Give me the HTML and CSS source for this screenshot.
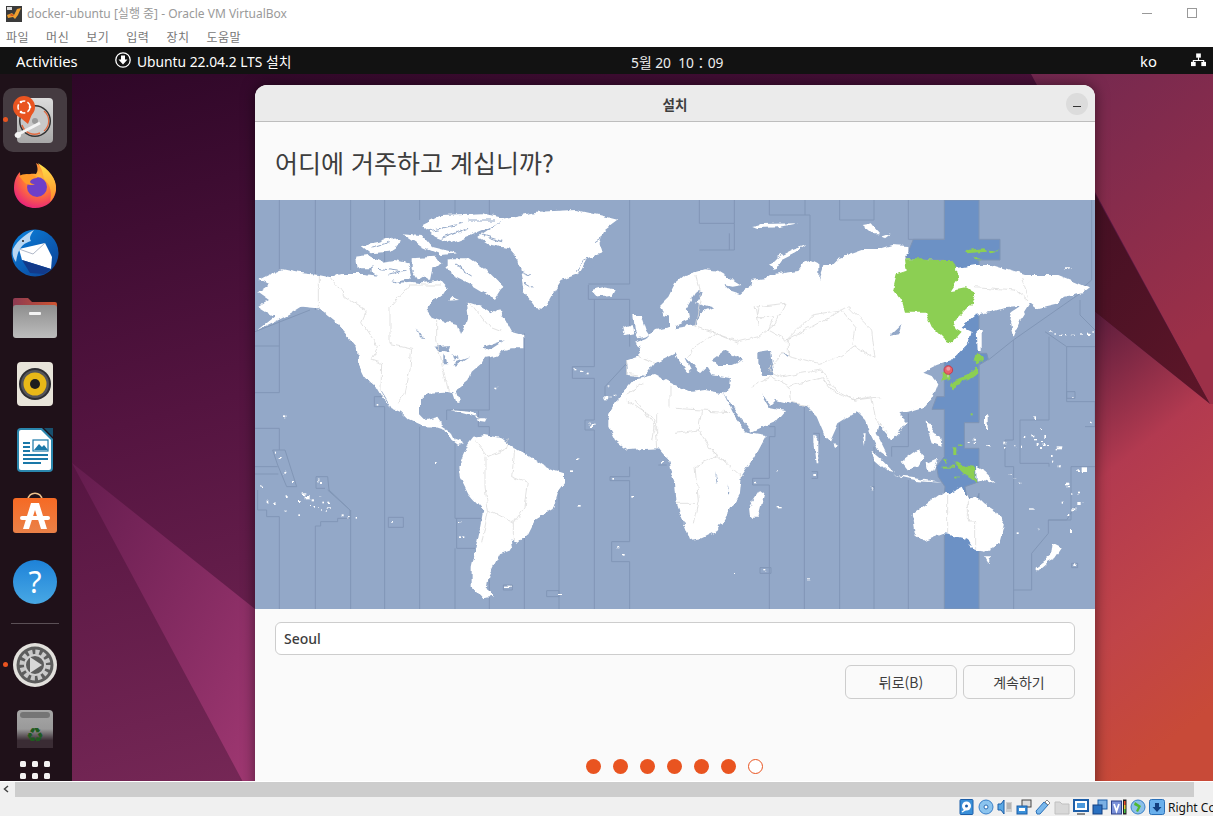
FILE: index.html
```html
<!DOCTYPE html>
<html lang="ko">
<head>
<meta charset="utf-8">
<title>docker-ubuntu</title>
<link rel="stylesheet" href="styles.css">
</head>
<body>
<div class="app">
  <header class="vb-title">
    <svg class="vb-logo" viewBox="0 0 16 16"><rect width="16" height="16" fill="#3a3a3a"/><rect x="1" y="1" width="5" height="3" fill="#ddd"/><path d="M1 9 L6 7 L8 9 L11 3 L15 2 L12 9 L9 13 L7 11 L2 12Z" fill="#f0a030"/><path d="M3 9 L6 8 L8 10 L6 10Z" fill="#d8501c"/></svg>
    <span class="vb-title-text">docker-ubuntu [실행 중] - Oracle VM VirtualBox</span>
    <span class="win-min"></span>
    <span class="win-max"></span>
  </header>
  <nav class="vb-menu">
    <span>파일</span><span>머신</span><span>보기</span><span>입력</span><span>장치</span><span>도움말</span>
  </nav>
  <div class="topbar">
    <span class="tb-activities">Activities</span>
    <svg class="tb-dl" viewBox="0 0 16 16"><circle cx="8" cy="8" r="7.2" fill="none" stroke="#fff" stroke-width="1.3"/><path d="M6 3.5h4v4h2.5L8 12.5 3.500 7.500H6z" fill="#fff"/></svg>
    <span class="tb-app">Ubuntu 22.04.2 LTS 설치</span>
    <span class="tb-clock">5월 20&nbsp; 10：09</span>
    <span class="tb-lang">ko</span>
    <svg class="tb-net" viewBox="0 0 16 14"><path d="M8 4v4M2.500 10V7.500h11V10" fill="none" stroke="#fff" stroke-width="1.200"/><rect x="5.500" y="0" width="5" height="4.500" fill="#fff"/><rect x="0" y="9" width="5" height="4.500" fill="#fff"/><rect x="11" y="9" width="5" height="4.500" fill="#fff"/></svg>
  </div>
  <main class="desktop">
    <svg class="wallpaper" viewBox="0 74 1213 708">
      <defs>
        <linearGradient id="wpBase" x1="0" y1="0" x2="0.45" y2="1"><stop offset="0" stop-color="#2c0626"/><stop offset=".45" stop-color="#541440"/><stop offset="1" stop-color="#7c2b5a"/></linearGradient>
        <linearGradient id="wpTop" x1="0" y1="0" x2="0.4" y2="1"><stop offset="0" stop-color="#722850"/><stop offset="1" stop-color="#9c3048"/></linearGradient>
        <linearGradient id="wpDark" x1="0" y1="0" x2="1" y2="1"><stop offset="0" stop-color="#3c0e22"/><stop offset="1" stop-color="#5e1628"/></linearGradient>
        <linearGradient id="wpLow" x1="0" y1="0" x2="0.2" y2="1"><stop offset="0" stop-color="#5a1c3c"/><stop offset=".35" stop-color="#b23a50"/><stop offset=".7" stop-color="#c04448"/><stop offset="1" stop-color="#c84a38"/></linearGradient>
        <linearGradient id="wpTri" x1="0" y1="0" x2="1" y2="1"><stop offset="0" stop-color="#641c4e"/><stop offset="1" stop-color="#a03872"/></linearGradient>
      </defs>
      <rect x="0" y="74" width="1213" height="708" fill="url(#wpBase)"/>
      <polygon points="1031,74 1213,74 1213,410 1210,404" fill="url(#wpTop)"/>
      <polygon points="1095,194 1210,404 1095,312 1000,250" fill="url(#wpDark)"/>
      <polygon points="1095,312 1210,404 1213,404 1213,782 1095,782" fill="url(#wpLow)"/>
      <polygon points="72,463 255,609 255,782 243,782" fill="url(#wpTri)"/>
    </svg>
    <aside class="dock">
      <div class="dock-item is-active">
        <span class="run-dot"></span>
        <svg class="icon" viewBox="0 0 50 50"><defs><linearGradient id="diskG" x1="0" y1="0" x2="0" y2="1"><stop offset="0" stop-color="#dcdcdc"/><stop offset="1" stop-color="#a8a8a8"/></linearGradient></defs><rect x="7" y="3" width="36" height="45" rx="4" fill="url(#diskG)"/><circle cx="25" cy="26" r="16" fill="#333"/><circle cx="25" cy="26" r="14.500" fill="#c8c8c8"/><path d="M34 16a13 13 0 0 1 0 20" fill="none" stroke="#e06a40" stroke-width="1.200"/><path d="M12 30a13 13 0 0 0 18 8" fill="none" stroke="#e06a40" stroke-width="1.500"/><circle cx="25" cy="26" r="3" fill="#999"/><path d="M5 41L30 28" stroke="#f4f4f4" stroke-width="3"/><circle cx="8" cy="40" r="3" fill="#f4f4f4"/><circle cx="14" cy="12" r="11" fill="#e95420"/><path d="M6 19L18 29 22 19Z" fill="#e95420"/><circle cx="14" cy="12" r="6" fill="none" stroke="#fff" stroke-width="1.500" stroke-dasharray="5.500 2.300"/><circle cx="20" cy="12" r="1.300" fill="#fff"/><circle cx="11" cy="7" r="1.300" fill="#fff"/><circle cx="11" cy="17" r="1.300" fill="#fff"/></svg>
      </div>
      <div class="dock-item">
        <svg class="icon" viewBox="0 0 50 50"><defs><radialGradient id="ffG" cx=".6" cy=".3" r=".8"><stop offset="0" stop-color="#ffbd3a"/><stop offset=".5" stop-color="#ff7139"/><stop offset="1" stop-color="#e31587"/></radialGradient><linearGradient id="ffY" x1="0" y1="0" x2="0" y2="1"><stop offset="0" stop-color="#ffe24a"/><stop offset="1" stop-color="#ff8a2a"/></linearGradient></defs><path d="M26 2C38 8 47 18 46 29 45 40 36 47 25 47 13 47 4 38 4 27 4 20 6 15 10 11 10 15 11 17 13 18 16 13 22 12 26 13 28 10 28 7 26 2Z" fill="url(#ffG)"/><path d="M28 2c10 6 19 15 18 27-1 5-3 9-6 12 2-8 1-17-6-23-1-4-1-9-6-16z" fill="url(#ffY)"/><circle cx="27" cy="26" r="10" fill="#6e3fc8"/><path d="M9 15c5-3 13-3 19 2-4 0-7 1-8 4 1 2 3 2 5 2-3 2-9 1-11-2-2-2-3-4-5-6z" fill="#ff9a2a"/></svg>
      </div>
      <div class="dock-item">
        <svg class="icon" viewBox="0 0 50 50"><defs><linearGradient id="tbG" x1="0" y1="0" x2="1" y2="1"><stop offset="0" stop-color="#0a84e0"/><stop offset="1" stop-color="#0d3f92"/></linearGradient></defs><circle cx="25" cy="26" r="23.500" fill="url(#tbG)"/><path d="M3 22C8 12 18 6 24 3 20 8 19 12 21 14 14 16 8 20 6 35 3 31 2 27 3 22Z" fill="#b9d7f3"/><path d="M9 22L35 16 42 30 41 42 12 33Z" fill="#fff"/><path d="M9 22L23 27 35 16" fill="none" stroke="#b0b8c8" stroke-width="1"/><path d="M12 33L41 42 34 47 20 46Z" fill="#123a8a"/><circle cx="13" cy="14" r="1" fill="#222"/></svg>
      </div>
      <div class="dock-item">
        <svg class="icon" viewBox="0 0 50 50"><defs><linearGradient id="flT" x1="0" y1="0" x2="1" y2="0"><stop offset="0" stop-color="#8d3a52"/><stop offset="1" stop-color="#cf5430"/></linearGradient><linearGradient id="flB" x1="0" y1="0" x2="0" y2="1"><stop offset="0" stop-color="#8e8e8e"/><stop offset="1" stop-color="#bdbdbd"/></linearGradient></defs><path d="M3 14V7a2 2 0 0 1 2-2h13l4 4h23a2 2 0 0 1 2 2v6z" fill="url(#flT)"/><rect x="3" y="12" width="44" height="33" rx="3" fill="url(#flB)"/><rect x="19" y="19" width="12" height="3" rx="1" fill="#f4f4f4"/></svg>
      </div>
      <div class="dock-item">
        <svg class="icon" viewBox="0 0 50 50"><rect x="7" y="3" width="36" height="44" rx="4" fill="#e8e4da"/><circle cx="25" cy="25" r="16" fill="#2e2e32"/><circle cx="25" cy="25" r="14" fill="#55555a"/><circle cx="25" cy="25" r="11.500" fill="#e8b818"/><circle cx="25" cy="25" r="5" fill="#1e1e1e"/></svg>
      </div>
      <div class="dock-item">
        <svg class="icon" viewBox="0 0 50 50"><path d="M11 3h21l11 11v29a4 4 0 0 1-4 4H11a4 4 0 0 1-4-4V7a4 4 0 0 1 4-4Z" fill="#2a86ad"/><path d="M11 5h20l10 10v28a2 2 0 0 1-2 2H11a2 2 0 0 1-2-2V7a2 2 0 0 1 2-2Z" fill="#fff"/><path d="M34 3h9v9z" fill="#18506e"/><g fill="#1a78a8"><rect x="13" y="17" width="7" height="2"/><rect x="13" y="21" width="7" height="2"/><rect x="13" y="25" width="7" height="2"/><rect x="13" y="29" width="25" height="2"/><rect x="13" y="33" width="25" height="2"/><rect x="13" y="37" width="18" height="2"/><rect x="23" y="15" width="15" height="11" fill="none" stroke="#1a78a8" stroke-width="1.200"/><path d="M24 25l5-6 3 3 2-2 4 5z"/></g></svg>
      </div>
      <div class="dock-item">
        <svg class="icon" viewBox="0 0 50 50"><defs><linearGradient id="stG" x1="0" y1="0" x2="0" y2="1"><stop offset="0" stop-color="#f66a24"/><stop offset="1" stop-color="#ea8148"/></linearGradient></defs><path d="M18 9C18 0 32 0 32 9" fill="none" stroke="#eec28c" stroke-width="1.500"/><rect x="3" y="7" width="44" height="35" rx="3" fill="url(#stG)"/><path d="M21 12h8l8 26h-6l-6-19-6 19h-6Z" fill="#fff"/><rect x="10" y="25" width="30" height="4" rx="2" fill="#fff"/></svg>
      </div>
      <div class="dock-item">
        <svg class="icon" viewBox="0 0 50 50"><defs><linearGradient id="hpG" x1="0" y1="0" x2="0" y2="1"><stop offset="0" stop-color="#1e82d8"/><stop offset="1" stop-color="#48a8e4"/></linearGradient></defs><circle cx="25" cy="25" r="22" fill="url(#hpG)"/><text x="25" y="36" class="help-mark">?</text></svg>
      </div>
      <div class="dock-sep"></div>
      <div class="dock-item">
        <span class="run-dot"></span>
        <svg class="icon" viewBox="0 0 50 50"><circle cx="25" cy="25" r="22" fill="#e2e0dc"/><circle cx="25" cy="25" r="18.500" fill="#5d5d5d"/><circle cx="25" cy="25" r="13" fill="none" stroke="#c9c9c9" stroke-width="5" stroke-dasharray="4 2.800"/><circle cx="25" cy="25" r="10" fill="#5d5d5d" stroke="#cfcfcf" stroke-width="2"/><path d="M20 17l12 8-12 8z" fill="#d8d8d8"/></svg>
      </div>
      <div class="dock-item">
        <svg class="icon" viewBox="0 0 50 50"><defs><linearGradient id="trG" x1="0" y1="0" x2="0" y2="1"><stop offset="0" stop-color="#a6a6a6"/><stop offset=".5" stop-color="#9a9a9a"/><stop offset=".8" stop-color="#3a2c34"/></linearGradient></defs><path d="M7 8a4 4 0 0 1 4-4h28a4 4 0 0 1 4 4v34H7z" fill="url(#trG)"/><rect x="10" y="6" width="30" height="6" rx="3" fill="#757575"/><text x="25" y="36" class="trash-mark">♻</text></svg>
      </div>
      <div class="dock-grid"><i></i><i></i><i></i><i></i><i></i><i></i><i></i><i></i><i></i></div>
    </aside>
    <section class="window">
      <header class="win-head">
        <span class="win-title">설치</span>
        <span class="win-close"></span>
      </header>
      <h1 class="page-title">어디에 거주하고 계십니까?</h1>
      <svg class="map" viewBox="0 0 2520 1227">
        <defs>
          <filter id="rough" filterUnits="userSpaceOnUse" x="0" y="0" width="2520" height="1227">
            <feTurbulence type="fractalNoise" baseFrequency="0.035" numOctaves="3" seed="4" result="n"/>
            <feDisplacementMap in="SourceGraphic" in2="n" scale="18" xChannelSelector="R" yChannelSelector="G"/>
            <feGaussianBlur stdDeviation="0.8"/>
          </filter>
        </defs>
        <rect width="2520" height="1227" fill="#93a8c8"/>
        <g transform="translate(1260 0)">
          <path d="M808,0H912V118H975V180H912V460H935L940,478L912,495V668H868V745H912V845L870,860L875,890L905,900L912,880V1227H808V885L810,860L790,830L785,800L808,770V628H771L785,590H808V180H690L715,118H808Z" fill="#6c91c5" stroke="#7f94b4" stroke-width="3"/>
        </g>
        <g fill="none" stroke="#8196b6" stroke-width="3">
          <path d="M73,0V578H0M0,438H73M0,685H73V750M0,800H68M0,822H70M8,870V930H35V950H73V1227"/>
          <path d="M53,750H90L125,860H95L68,795Z"/>
          <path d="M181,0V330M183,830H218L222,870L285,930V955H248V965H197V978H181V1227M183,830V865H210"/>
          <path d="M287,0V210M287,930V1227M218,870L285,930"/>
          <path d="M389,0V590H358V620H389V1227"/>
          <path d="M400,952H445V982H400Z"/>
          <path d="M494,680V1227M494,0V60"/>
          <path d="M600,0V40M600,730V955H680M605,955V1045H660M600,1045V1227"/>
          <path d="M703,0V60M703,470V630H575V660M670,632V680H703V1227"/>
          <path d="M808,400V1227M745,1155H772V1170H745Z"/>
          <path d="M912,250V1227M875,1172H912V1190H875Z"/>
          <path d="M1018,298V500H952V535H1018V660H990V690H1018V1227M1000,255V298H1124V440"/>
          <path d="M1124,0V252H1000M1124,1025H1070V1085H1124V1227M1124,800V830H1065V842H1124V1025M1210,795H1235"/>
          <path d="M1050,560L1115,490M1050,560V600"/>
          <path d="M0,395L165,330"/>
        </g>
        <g fill="none" stroke="#8196b6" stroke-width="3" transform="translate(1260 0)">
          <path d="M73,0V70H178V0M178,70V150H73M163,100V150M283,0V45H405V100M390,0V45M405,100V195L372,215V240M494,0V60H597V0M700,0V118H808"/>
          <path d="M283,680H300V710H283V835H233V855H283V1227M255,1103H288V1120H255Z"/>
          <path d="M415,700H433V730H415M410,815H428V835H410"/>
          <path d="M388,620V1227M494,670V1227M597,740V1227M587,860H598V868H587M700,640V740H650V770M700,1227V840"/>
          <path d="M912,660V460M1016,1227V1170H1070L1070,1060L1120,1000V960H1175L1200,920"/>
          <path d="M1015,420V720H990V800H1016V1170M1015,420L940,480M1015,420L1230,270M1110,395L1175,440H1260M1122,410V660H1035V790H1122V800M1175,440V545H1175V605H1260M1230,680H1260V605M1188,800H1260M1188,800V960H1120"/>
          <path d="M1190,1090H1208V1103H1190Z"/>
          <path d="M1175,575H1200V595H1175Z"/>
          <path d="M1215,270L1250,240V0M1215,300V345L1260,390"/>
        </g>
        <g filter="url(#rough)">
        <g fill="#fff">
          <path d="M10,240L40,225 80,208 130,218 190,225 225,232 260,222 330,222 400,232 420,250 470,245 500,250 555,240 575,262 560,285 540,300 515,330 530,350 570,365 605,375 615,405 630,375 640,345 635,305 680,320 710,340 730,325 745,350 770,395 805,405 805,445 770,445 745,450 720,465 690,470 680,490 650,515 640,540 615,560 605,575 615,605 605,610 595,580 570,575 520,578 495,600 495,640 515,660 550,650 560,665 560,680 590,700 600,720 630,730 610,735 590,720 570,690 540,680 500,678 460,660 435,635 410,625 380,575 350,550 330,530 310,490 305,440 280,410 240,365 190,325 140,320 100,345 60,365 10,390 60,350 20,325 10,320 45,300 10,275 40,255Z"/>
          <path d="M405,625L380,590 365,565 372,565 395,605Z"/>
          <path d="M300,170L340,165 380,185 345,205 305,205Z"/>
          <path d="M350,190L420,180 460,190 470,235 430,245 380,235 350,215Z"/>
          <path d="M500,75L560,45 680,40 750,55 700,85 640,110 590,130 540,110Z"/>
          <path d="M320,135L370,125 410,110 440,130 400,155 350,160Z"/>
          <path d="M440,100L500,105 530,140 610,160 560,165 500,140Z"/>
          <path d="M580,175L640,175 700,215 745,260 720,300 690,280 640,250 590,225Z"/>
          <path d="M470,175L540,170 530,215 490,240 470,210Z"/>
          <path d="M590,290L612,300 580,302Z"/>
          <path d="M520,180L545,170 560,190 535,205Z"/>
          <path d="M575,175L610,180 600,215 575,205Z"/>
          <path d="M510,200L530,215 525,240 505,228Z"/>
          <path d="M670,110L700,90 750,55 850,35 960,30 1030,45 1090,60 1050,90 1030,130 1040,160 1000,175 975,220 920,240 900,270 870,325 840,320 810,280 800,220 790,180 760,145 710,135Z"/>
          <path d="M1010,270L1040,262 1080,268 1070,288 1030,292Z"/>
          <path d="M1105,385L1130,375 1135,400 1110,405Z"/>
          <path d="M1135,345L1160,345 1175,390 1185,405 1150,415 1140,395Z"/>
          <path d="M610,800L640,730 655,710 690,705 740,715 780,745 825,770 870,800 930,820 930,845 905,880 890,930 840,960 820,1000 790,1025 770,1020 775,1045 735,1060 720,1090 700,1130 695,1170 720,1190 680,1195 650,1160 650,1100 670,1010 685,930 640,880 615,830Z"/>
          <path d="M585,630L640,635 680,655 640,645Z"/>
          <path d="M665,655L695,655 690,665 670,662Z"/>
          <g>
            <rect x="87" y="649" width="7" height="6"/><rect x="60" y="755" width="6" height="6"/><rect x="74" y="768" width="6" height="6"/><rect x="88" y="812" width="6" height="6"/><rect x="86" y="820" width="4" height="4"/><rect x="108" y="843" width="6" height="6"/><rect x="190" y="838" width="6" height="6"/><rect x="198" y="846" width="6" height="6"/><rect x="13" y="855" width="6" height="5"/><rect x="18" y="859" width="5" height="5"/><rect x="35" y="904" width="5" height="5"/><rect x="57" y="910" width="5" height="5"/><rect x="92" y="930" width="5" height="5"/><rect x="95" y="888" width="6" height="6"/><rect x="130" y="900" width="10" height="6"/><rect x="130" y="940" width="5" height="5"/><rect x="140" y="880" width="14" height="5"/><rect x="152" y="885" width="12" height="10"/><rect x="170" y="895" width="10" height="6"/><rect x="163" y="916" width="5" height="5"/><rect x="175" y="918" width="5" height="5"/><rect x="190" y="918" width="5" height="5"/><rect x="195" y="888" width="4" height="4"/><rect x="202" y="908" width="5" height="5"/><rect x="202" y="925" width="5" height="8"/><rect x="217" y="905" width="8" height="4"/><rect x="218" y="925" width="10" height="4"/><rect x="218" y="934" width="4" height="4"/><rect x="260" y="943" width="6" height="6"/><rect x="276" y="948" width="5" height="4"/><rect x="302" y="948" width="5" height="5"/><rect x="408" y="966" width="6" height="5"/><rect x="365" y="612" width="5" height="5"/><rect x="721" y="560" width="6" height="5"/><rect x="537" y="786" width="5" height="3"/><rect x="966" y="775" width="7" height="5"/><rect x="945" y="808" width="6" height="5"/><rect x="968" y="918" width="9" height="5"/><rect x="1132" y="888" width="5" height="5"/><rect x="1072" y="834" width="6" height="5"/><rect x="1087" y="1040" width="6" height="5"/><rect x="1106" y="1065" width="6" height="5"/><rect x="955" y="505" width="6" height="6"/><rect x="976" y="512" width="14" height="4"/><rect x="995" y="518" width="6" height="5"/><rect x="1055" y="556" width="5" height="4"/><rect x="1048" y="588" width="12" height="10"/><rect x="1063" y="590" width="8" height="5"/><rect x="1076" y="584" width="5" height="5"/><rect x="998" y="668" width="6" height="5"/><rect x="1006" y="672" width="8" height="12"/><rect x="1014" y="668" width="5" height="6"/><rect x="1218" y="780" width="6" height="5"/><rect x="612" y="960" width="10" height="4"/><rect x="612" y="1012" width="6" height="5"/><rect x="622" y="1012" width="6" height="5"/><rect x="750" y="1160" width="20" height="4"/><rect x="912" y="1182" width="12" height="3"/>
          </g>
        </g>
        <g fill="none" stroke="#93a8c8" stroke-width="3">
          <path d="M505,95L560,85 620,70M560,115L640,85M640,60L720,60M350,145L410,125M370,205L440,215M400,225L455,210M600,195L650,225M1020,125L1050,105M1030,165L985,180 970,215M975,215L1015,195M800,215L825,225M810,250L835,265M680,105L745,125"/>
        </g>
        <g fill="#93a8c8">
          <path d="M535,440L585,435 580,455 550,450Z"/><path d="M565,460L577,490 565,490Z"/><path d="M590,462L612,478 596,482Z"/><path d="M595,490L645,472 605,497Z"/><path d="M680,445L750,420 700,452Z"/><path d="M485,385L505,415 495,412Z"/>
        </g>
        <g transform="translate(1260 0)">
          <g fill="#fff">
            <path d="M0,250L30,225 90,208 130,212 200,255 170,260 145,255 165,275 195,285 225,262 230,240 270,235 285,225 330,215 370,210 385,190 410,180 430,190 430,240 445,195 470,195 490,175 560,150 600,150 650,135 700,138 700,160 690,175 780,180 840,205 900,195 950,195 1000,210 1050,225 1100,225 1150,225 1200,245 1245,265 1225,280 1170,290 1150,310 1085,325 1065,310 1040,350 1015,410 1005,370 1010,340 1040,320 985,325 950,335 900,345 860,380 890,395 880,430 850,460 830,480 785,495 745,515 770,525 790,550 775,590 750,620 700,635 670,640 695,665 670,700 650,720 625,690 610,670 605,700 640,770 610,750 590,710 570,660 545,635 490,670 465,725 450,710 425,650 395,620 340,610 300,600 285,615 255,580 280,620 330,630 300,665 230,695 185,640 145,580 165,560 168,535 110,525 95,500 75,520 55,495 30,470 50,510 40,520 10,480 0,460 -20,470 -60,490 -90,530 -140,525 -145,480 -115,470 -100,440 -120,425 -80,410 -60,390 -15,380 -15,350 -35,345 -45,315 -20,290Z"/>
            <path d="M-200,660L-190,630 -160,580 -125,540 -60,525 0,555 50,575 90,570 145,580 180,650 215,695 275,705 240,770 200,830 195,880 165,930 130,990 80,1015 45,1020 30,980 5,910 0,850 -15,810 -20,780 -50,745 -140,750 -180,720 -200,680Z"/>
            <path d="M255,870L268,880 250,950 225,950 222,920Z"/>
            <path d="M475,725L490,735 480,745Z"/>
            <path d="M680,785L700,770 735,745 748,770 730,800 700,810Z"/>
            <path d="M585,750L620,780 660,820 640,815 600,780Z"/>
            <path d="M655,825L710,830 800,845 720,840Z"/>
            <path d="M755,665L775,670 770,700 795,710 800,740 770,730 760,700Z"/>
            <path d="M755,790L790,775 775,815 760,815Z"/>
            <path d="M903,800L930,815 965,850 930,835 905,842Z"/>
            <path d="M905,390L920,390 920,450 908,450Z"/>
            <path d="M710,945L775,900 810,875 820,880 860,860 880,900 905,890 925,910 965,935 990,975 975,1030 930,1055 900,1050 860,1010 810,1000 745,1025 720,1005Z"/>
            <path d="M930,1072L950,1072 940,1090Z"/>
            <path d="M1130,1030L1160,1045 1140,1075 1120,1085 1085,1115 1085,1100 1125,1070Z"/>
            <path d="M395,135L350,150 310,170 285,195 300,210 320,180 360,160Z"/>
            <path d="M560,75L590,70 615,100 590,100Z"/>
            <path d="M620,110L650,100 630,115Z"/>
            <path d="M1165,205L1190,205 1175,210Z"/>
            <path d="M235,78L260,72 370,70 310,82 250,84Z"/>
            <path d="M930,645L938,650 938,690 930,690Z"/>
            <path d="M418,705L430,720 430,790 425,790 418,730Z"/>
            <path d="M562,700L572,700 570,735Z"/>
            <rect x="1125" y="394" width="7" height="4"/><rect x="1138" y="400" width="7" height="4"/><rect x="1156" y="404" width="8" height="4"/><rect x="1170" y="405" width="7" height="4"/><rect x="1190" y="404" width="9" height="4"/><rect x="1212" y="400" width="10" height="4"/><rect x="1236" y="398" width="8" height="4"/><rect x="1252" y="394" width="8" height="4"/>
            <rect x="875" y="726" width="6" height="4"/><rect x="890" y="716" width="8" height="6"/><rect x="893" y="728" width="6" height="4"/><rect x="940" y="732" width="8" height="4"/><rect x="985" y="725" width="6" height="5"/><rect x="987" y="738" width="5" height="5"/><rect x="1018" y="738" width="6" height="4"/><rect x="1038" y="740" width="6" height="4"/><rect x="1046" y="708" width="5" height="5"/>
            <rect x="1072" y="706" width="6" height="6"/><rect x="1080" y="718" width="6" height="6"/><rect x="1085" y="732" width="6" height="6"/><rect x="1095" y="744" width="6" height="6"/><rect x="1103" y="732" width="6" height="6"/><rect x="1108" y="708" width="5" height="6"/><rect x="1098" y="720" width="6" height="6"/><rect x="1113" y="735" width="6" height="5"/>
            <rect x="1125" y="765" width="5" height="6"/><rect x="1133" y="782" width="5" height="6"/><rect x="1148" y="796" width="6" height="6"/>
            <rect x="1207" y="808" width="8" height="8"/><rect x="1220" y="802" width="16" height="14"/><rect x="1170" y="848" width="7" height="8"/><rect x="1175" y="858" width="5" height="5"/>
            <rect x="1160" y="902" width="6" height="6"/><rect x="1186" y="880" width="6" height="5"/><rect x="1212" y="878" width="6" height="5"/><rect x="1204" y="906" width="10" height="12"/><rect x="1195" y="925" width="6" height="6"/><rect x="1180" y="942" width="6" height="6"/><rect x="1222" y="905" width="4" height="4"/>
            <rect x="1000" y="820" width="8" height="3"/><rect x="1015" y="832" width="6" height="3"/><rect x="1030" y="845" width="6" height="3"/>
            <rect x="1145" y="742" width="14" height="6"/><rect x="1078" y="652" width="5" height="5"/><rect x="1095" y="685" width="5" height="5"/><rect x="1245" y="668" width="5" height="5"/><rect x="1185" y="588" width="8" height="5"/><rect x="1195" y="1093" width="6" height="5"/><rect x="1025" y="997" width="6" height="5"/><rect x="1088" y="980" width="5" height="5"/><rect x="1185" y="985" width="6" height="14"/><rect x="1065" y="925" width="14" height="4"/><rect x="303" y="812" width="5" height="5"/><rect x="237" y="845" width="5" height="5"/><rect x="305" y="918" width="15" height="4"/><rect x="415" y="822" width="8" height="6"/><rect x="590" y="862" width="5" height="3"/><rect x="268" y="1110" width="6" height="4"/><rect x="180" y="1116" width="3" height="3"/><rect x="396" y="1138" width="10" height="3"/>
          </g>
          <g fill="#93a8c8">
            <path d="M35,320L65,270 85,275 60,310 115,325 75,340 65,375 0,385 0,375 45,355 40,330Z"/>
            <path d="M110,480L150,450 205,480 170,495 125,495Z"/>
            <path d="M250,455L285,450 290,490 295,525 265,525 250,490Z"/>
            <path d="M645,405L680,372 672,400Z"/>
            <path d="M325,462L340,462 335,470Z"/>
            <path d="M120,810L130,850 125,850Z"/>
            <path d="M155,850L160,880 156,880Z"/>
            <path d="M875,1010L890,1035 865,1030Z" fill="#6c91c5"/>
          </g>
          <g fill="#8ccf52">
            <path d="M690,175L740,175 780,180 830,180 845,200 850,240 830,270 870,262 900,280 890,310 850,350 835,380 860,395 830,430 810,420 770,380 750,335 690,335 680,300 655,265 665,225 695,215Z"/>
            <path d="M800,520L820,515 825,540 800,545Z"/>
            <path d="M905,495L910,520 880,540 840,555 830,570 825,555 835,540 870,530 895,510Z"/>
            <path d="M895,480L905,460 925,470 930,480 905,490Z"/>
            <path d="M835,785L860,795 900,800 903,842 870,825 850,805Z"/>
            <path d="M875,150L925,145 930,155 880,160Z"/>
            <path d="M940,152L970,155 945,160Z"/>
            <path d="M895,170L920,178 900,178Z"/>
            <path d="M805,770L815,775 810,795Z"/>
            <rect x="835" y="745" width="12" height="20"/><rect x="853" y="730" width="6" height="8"/><rect x="887" y="640" width="6" height="6"/><rect x="800" y="800" width="40" height="6"/><rect x="835" y="830" width="20" height="5"/>
          </g>
          <g fill="none" stroke="#dcdcdc" stroke-width="2.500">
            <path d="M-140,520L-110,525M-145,480V525M-115,470L-60,490"/>
            <path d="M60,225L75,300 60,380 120,400 190,425 250,410 300,370 330,310 250,320 245,350 295,350 280,390 335,420 410,380 520,320 590,390 600,475 540,440 500,470 430,490 350,470 325,460 280,510 320,530 380,520 440,510 470,560 540,600 620,590"/>
            <path d="M340,420V470M335,420L410,345 500,330 540,380 530,440"/>
            <path d="M0,625L80,630 165,635M80,630L70,690 110,750 130,770 60,800 70,900 55,970M110,750L200,830M0,700L70,690M5,910L60,910"/>
            <path d="M230,560L290,530 345,560 350,610 400,620M345,560L440,530 470,570 540,600 590,590 600,650 640,700"/>
            <path d="M818,880V1000M880,900V960H902V1050"/>
            <path d="M1040,240L1060,290M900,260L1020,270 1060,300"/>
            <path d="M-120,600L-60,680 -55,745M-55,640V700"/>
            <path d="M240,320L250,380M60,440L120,400 190,430M40,470L60,440"/>
          </g>
        </g>
        <g fill="none" stroke="#dcdcdc" stroke-width="2.500">
          <path d="M190,225V325M225,235L270,290 335,330 320,365 370,440 350,480 380,490 378,570M465,255L405,325V430L470,445 465,510 450,580 430,610M465,255H555M545,360V420L565,510 580,575M640,305L700,380 740,395M1115,585L1165,550M1115,600L1200,660 1190,720M1245,560V620"/>
          <path d="M660,720L700,770 750,750 760,715M690,770V860L700,930 775,970 810,920 820,850 770,830 780,745M700,930L680,1030M775,970V1020"/>
        </g>
        </g>
        <g transform="translate(1260 0)">
          <path d="M819,515V532" stroke="#d8d8d8" stroke-width="3"/>
          <circle cx="820" cy="510" r="13" fill="#e8606a" stroke="#c23644" stroke-width="2.500"/>
          <circle cx="820" cy="506" r="6" fill="#f09aa0"/>
        </g>
      </svg>
      <div class="form">
        <div class="tz-input">Seoul</div>
        <div class="actions">
          <button class="btn" type="button">뒤로(B)</button>
          <button class="btn" type="button">계속하기</button>
        </div>
        <div class="steps"><i></i><i></i><i></i><i></i><i></i><i></i><i class="todo"></i></div>
      </div>
    </section>
  </main>
  <div class="vb-scroll">
    <svg class="scroll-arrow" viewBox="0 0 6 8"><path d="M5 1L1.500 4 5 7" fill="none" stroke="#444" stroke-width="1.500"/></svg>
    <span class="scroll-thumb"></span>
  </div>
  <footer class="vb-status">
    <svg class="st" viewBox="0 0 16 16"><rect x="1" y="0.500" width="13" height="15" rx="1" fill="#3a8fd8" stroke="#1c5ea8"/><circle cx="7.500" cy="7" r="4.500" fill="#fff"/><circle cx="7.500" cy="7" r="1.500" fill="#1c5ea8"/><path d="M3 13l6-4" stroke="#fff" stroke-width="1.500"/></svg>
    <svg class="st" viewBox="0 0 16 16"><circle cx="8" cy="8" r="7" fill="#8cc4ee" stroke="#3a80c8"/><circle cx="8" cy="8" r="2" fill="#fff" stroke="#2a6ab0"/></svg>
    <svg class="st" viewBox="0 0 16 16"><path d="M1 5h3l3-4v14l-3-4H1z" fill="#5aa8e4" stroke="#1c5ea8"/><path d="M9 3h6v10H9z" fill="#cfcfcf"/><path d="M10 5h4M10 7h4M10 9h4" stroke="#999"/></svg>
    <svg class="st" viewBox="0 0 16 16"><rect x="6" y="1" width="9" height="7" fill="#dcdcdc" stroke="#444"/><rect x="1" y="7" width="10" height="8" fill="#3a8fd8" stroke="#1c5ea8"/><rect x="3" y="9" width="6" height="3" fill="#fff"/></svg>
    <svg class="st" viewBox="0 0 16 16"><path d="M1 12L9 3l4 3-8 9H2z" fill="#7ab8ec" stroke="#2a70b8"/><path d="M10 3l2-2 3 3-2 2z" fill="#fff" stroke="#888"/></svg>
    <svg class="st" viewBox="0 0 16 16"><path d="M1 3h5l2 2h7v10H1z" fill="#d8d8d8" stroke="#c0c0c0"/></svg>
    <svg class="st" viewBox="0 0 16 16"><rect x="1" y="1" width="14" height="11" fill="#fff" stroke="#1c5ea8" stroke-width="2"/><rect x="4" y="4" width="8" height="5" fill="#4a98dc"/><path d="M4 15h8" stroke="#888" stroke-width="2"/></svg>
    <svg class="st" viewBox="0 0 16 16"><rect x="6" y="1" width="9" height="9" fill="#7ab0e4" stroke="#1c5ea8"/><rect x="1" y="6" width="9" height="9" fill="#2a70c0" stroke="#123f80"/></svg>
    <svg class="st st-v" viewBox="0 0 16 16"><rect x="0.500" y="2" width="10" height="13" fill="#7a90d8" stroke="#2a3f88"/><path d="M3 5l2.500 7L8 5" fill="none" stroke="#fff" stroke-width="1.800"/><rect x="12" y="0.500" width="3.500" height="15" fill="#222"/><rect x="13" y="2" width="1.500" height="4" fill="#e84a2a"/><rect x="13" y="6" width="1.500" height="4" fill="#f0d030"/><rect x="13" y="10" width="1.500" height="4" fill="#40c040"/></svg>
    <svg class="st" viewBox="0 0 16 16"><circle cx="8" cy="8" r="7" fill="#8cc0e8" stroke="#3a80c8"/><path d="M5 3l6 4-3 6-2-1 2-4-4-2z" fill="#50b830"/></svg>
    <svg class="st" viewBox="0 0 16 16"><rect x="0.500" y="0.500" width="15" height="15" rx="2" fill="#6ab0ec" stroke="#2a70b8"/><path d="M6 4h4v4h2.500L8 13 3.500 8H6z" fill="#123f80"/></svg>
    <span class="st-key">Right Control</span>
  </footer>
</div>
</body>
</html>
```

FILE: styles.css
```css
* { box-sizing: border-box; }
html, body { margin: 0; padding: 0; height: 100%; overflow: hidden; background: #fff; }
body { font-family: "Noto Sans", "Noto Sans CJK KR", sans-serif; }
.app { width: 1213px; height: 816px; display: flex; flex-direction: column; overflow: hidden; }

.vb-title { height: 26px; display: flex; align-items: center; padding-left: 6px; background: #fff; flex: none; }
.vb-logo { width: 16px; height: 16px; flex: none; margin-top: 1px; }
.vb-title-text { margin-left: 5px; font: 12px "Noto Sans", "Noto Sans CJK KR", sans-serif; color: #9a9a9a; white-space: nowrap; }
.win-min { margin-left: auto; width: 10px; height: 1px; background: #999; margin-top: 1px; }
.win-max { margin-left: 35px; margin-right: 16px; width: 10px; height: 10px; border: 1px solid #999; }

.vb-menu { height: 21px; flex: none; display: flex; gap: 17px; padding-left: 6px; align-items: center; font: 12px "Noto Sans CJK KR", sans-serif; letter-spacing: .5px; color: #777; background: #fff; }

.topbar { height: 27px; flex: none; background: #121212; color: #fff; display: flex; align-items: center; font: 14.800px "Noto Sans", "Noto Sans CJK KR", sans-serif; white-space: nowrap; }
.tb-activities { margin-left: 16px; width: 99px; }
.tb-dl { width: 16px; height: 16px; flex: none; margin-top: -2px; }
.tb-app { margin-left: 6px; width: 154px; font-size: 13.800px; }
.tb-clock { margin-left: 340px; width: 93px; font-size: 13.800px; margin-top: 2px; color: #eee; }
.tb-lang { margin-left: 416px; }
.tb-net { width: 15px; height: 14px; flex: none; margin-left: 34px; margin-top: -2px; }

.desktop { position: relative; height: 707px; flex: none; display: flex; overflow: hidden; background: #2c0626; }
.wallpaper { position: absolute; left: 0; top: 0; width: 1213px; height: 708px; }

.dock { position: relative; width: 72px; height: 707px; flex: none; padding-top: 13px; background: #1f1119; overflow: hidden; }
.dock-item { position: relative; width: 70px; height: 66px; display: flex; align-items: center; justify-content: center; }
.dock-item.is-active::before { content: ""; position: absolute; left: 3px; top: 1px; width: 64px; height: 64px; border-radius: 10px; background: #453b41; }
.icon { position: relative; width: 50px; height: 50px; flex: none; overflow: visible; }
.run-dot { position: absolute; left: 3px; top: 30px; width: 5px; height: 5px; border-radius: 50%; background: #e95420; z-index: 1; }
.help-mark { font: 30px "Noto Sans", sans-serif; fill: #fff; text-anchor: middle; }
.trash-mark { font: 20px "DejaVu Sans", sans-serif; fill: #1f5a20; text-anchor: middle; }
.dock-sep { height: 1px; width: 48px; margin: 8px 0 8px 11px; background: #5b5056; }
.dock-grid { position: absolute; left: 20px; top: 687px; display: grid; grid-template-columns: repeat(3, 6px); gap: 6px; }
.dock-grid i { display: block; width: 6px; height: 6px; border-radius: 1.500px; background: #f2f2f2; }

.window { position: relative; width: 840px; height: 720px; margin: 11px 0 0 183px; flex: none; background: #fafafa; border-radius: 12px 12px 0 0; box-shadow: 0 0 14px rgba(0, 0, 0, .5); overflow: hidden; display: flex; flex-direction: column; }
.win-head { height: 37px; flex: none; display: flex; align-items: center; justify-content: center; background: #ebebeb; border-bottom: 1px solid #bdbdbd; position: relative; }
.win-title { font: 700 13.500px "Noto Sans CJK KR", sans-serif; color: #3d3d3d; margin-top: 1px; }
.win-close { position: absolute; right: 7px; top: 8px; width: 22px; height: 22px; border-radius: 50%; background: #dcdcdc; }
.win-close::after { content: ""; position: absolute; left: 7px; top: 13px; width: 8px; height: 1px; background: #333; }
.page-title { height: 78px; flex: none; margin: 0; padding: 22px 0 0 20px; font: 400 25px/36px "Noto Sans CJK KR", sans-serif; color: #3d3d3d; background: #fafafa; }
.map { display: block; width: 840px; height: 409px; flex: none; }
.form { padding: 13px 20px 0; flex: 1; background: #fafafa; }
.tz-input { height: 33px; border: 1px solid #cdcdcd; border-radius: 6px; background: #fff; padding: 0 8px; font: 500 14px/31px "Noto Sans", sans-serif; color: #3d3d3d; }
.actions { display: flex; justify-content: flex-end; gap: 6px; margin-top: 10px; }
.btn { width: 112px; height: 34px; border: 1px solid #cdcdcd; border-radius: 6px; background: #fafafa; font: 14px "Noto Sans CJK KR", sans-serif; color: #3d3d3d; padding: 0; }
.steps { display: flex; justify-content: center; gap: 12px; margin-top: 60px; margin-right: 2px; }
.steps i { display: block; width: 15px; height: 15px; border-radius: 50%; background: #e95420; }
.steps i.todo { background: #fff; border: 1px solid #e95420; }

.vb-scroll { height: 17px; flex: none; display: flex; background: #f0f0f0; border-top: 1px solid #fff; }
.scroll-arrow { width: 6px; height: 8px; margin: 3px 0 0 3px; flex: none; }
.scroll-thumb { display: block; width: 1179px; height: 15px; margin-left: 6px; background: #cdcdcd; }
.vb-status { height: 18px; flex: none; display: flex; align-items: center; gap: 3px; padding-left: 959px; background: #f0f0f0; white-space: nowrap; overflow: hidden; }
.st { width: 16px; height: 16px; flex: none; }
.st-key { font: 12px "Noto Sans", sans-serif; color: #111; margin-left: 0; }
```
